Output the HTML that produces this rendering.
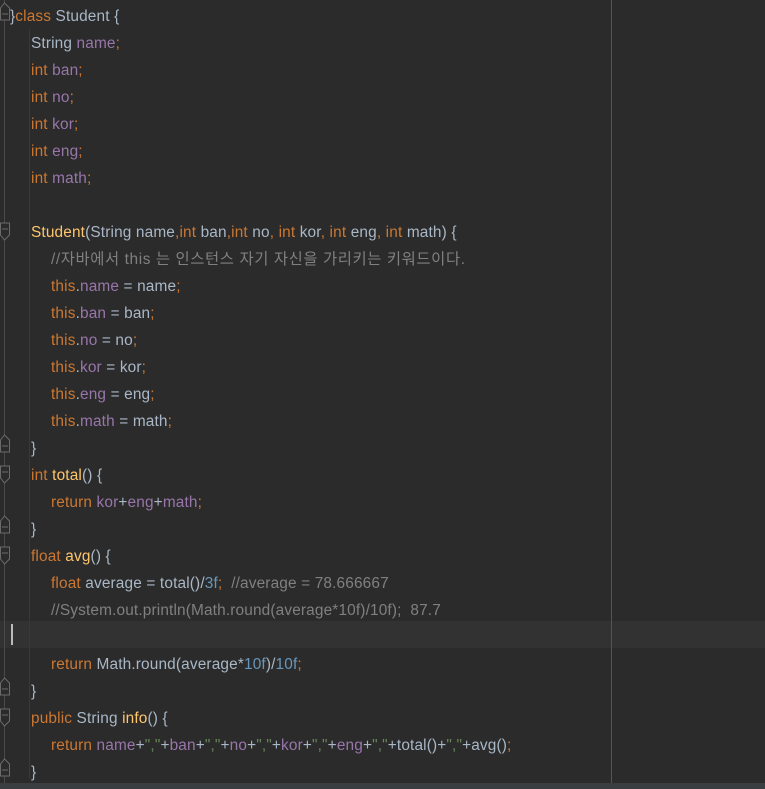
<!DOCTYPE html>
<html><head><meta charset="utf-8"><style>
html,body{margin:0;padding:0;background:#2b2b2b;width:765px;height:789px;overflow:hidden}
body{position:relative;font-family:"Liberation Sans","Noto Sans CJK KR",sans-serif;font-size:15.4px;letter-spacing:0.15px;color:#a9b7c6}
.l{position:absolute;left:0;height:27px;line-height:27px;white-space:pre;margin-top:1px}
.k{color:#cc7832}.f{color:#9876aa}.c{color:#808080}.n{color:#6897bb}.m{color:#ffc66d}.s{color:#6a8759}
.cur{position:absolute;left:0;top:621px;width:765px;height:27px;background:#323232}
.caret{position:absolute;left:11px;top:624px;width:2px;height:21px;background:#bbb}
.gut{position:absolute;left:4px;top:0;width:1px;height:783px;background:#4a4a4a}
.rm{position:absolute;left:611px;top:0;width:1px;height:783px;background:#555}
.bot{position:absolute;left:0;top:783px;width:765px;height:6px;background:#3b3e41}
.ig{position:absolute;width:1px;background:#393939}
.fm{position:absolute;left:0}
</style></head><body>
<div class="cur"></div>
<div class="gut"></div>
<div class="rm"></div>
<div class="ig" style="left:29px;top:29px;height:750px"></div>
<svg class="fm" width="12" height="789" style="top:0">
<g fill="#2b2b2b" stroke="#6b6b6b" stroke-width="1">
<path d="M0.5 8 L4.5 3 L9.5 8 V20 H0.5 Z"/><line x1="2" y1="14" x2="8" y2="14"/>
<path d="M0.5 223 H9.5 V235 L4.5 240 L0.5 235 Z"/><line x1="2" y1="229" x2="8" y2="229"/>
<path d="M0.5 440 L4.5 435 L9.5 440 V452 H0.5 Z"/><line x1="2" y1="446" x2="8" y2="446"/>
<path d="M0.5 466 H9.5 V478 L4.5 483 L0.5 478 Z"/><line x1="2" y1="472" x2="8" y2="472"/>
<path d="M0.5 521 L4.5 516 L9.5 521 V533 H0.5 Z"/><line x1="2" y1="527" x2="8" y2="527"/>
<path d="M0.5 547 H9.5 V559 L4.5 564 L0.5 559 Z"/><line x1="2" y1="553" x2="8" y2="553"/>
<path d="M0.5 683 L4.5 678 L9.5 683 V695 H0.5 Z"/><line x1="2" y1="689" x2="8" y2="689"/>
<path d="M0.5 709 H9.5 V721 L4.5 726 L0.5 721 Z"/><line x1="2" y1="715" x2="8" y2="715"/>
<path d="M0.5 764 L4.5 759 L9.5 764 V776 H0.5 Z"/><line x1="2" y1="770" x2="8" y2="770"/>
</g></svg>
<div class="caret"></div>
<div class="l" style="top:2px;left:10px">}<span class="k">class</span> Student {</div>
<div class="l" style="top:29px;left:31px">String <span class="f">name</span><span class="k">;</span></div>
<div class="l" style="top:56px;left:31px"><span class="k">int</span> <span class="f">ban</span><span class="k">;</span></div>
<div class="l" style="top:83px;left:31px"><span class="k">int</span> <span class="f">no</span><span class="k">;</span></div>
<div class="l" style="top:110px;left:31px"><span class="k">int</span> <span class="f">kor</span><span class="k">;</span></div>
<div class="l" style="top:137px;left:31px"><span class="k">int</span> <span class="f">eng</span><span class="k">;</span></div>
<div class="l" style="top:164px;left:31px"><span class="k">int</span> <span class="f">math</span><span class="k">;</span></div>
<div class="l" style="top:218px;left:31px"><span class="m">Student</span>(String name<span class="k">,int</span> ban<span class="k">,int</span> no<span class="k">, int</span> kor<span class="k">, int</span> eng<span class="k">, int</span> math) {</div>
<div class="l c" style="top:245px;left:51px;letter-spacing:0.6px">//자바에서 this 는 인스턴스 자기 자신을 가리키는 키워드이다.</div>
<div class="l" style="top:272px;left:51px"><span class="k">this</span>.<span class="f">name</span> = name<span class="k">;</span></div>
<div class="l" style="top:299px;left:51px"><span class="k">this</span>.<span class="f">ban</span> = ban<span class="k">;</span></div>
<div class="l" style="top:326px;left:51px"><span class="k">this</span>.<span class="f">no</span> = no<span class="k">;</span></div>
<div class="l" style="top:353px;left:51px"><span class="k">this</span>.<span class="f">kor</span> = kor<span class="k">;</span></div>
<div class="l" style="top:380px;left:51px"><span class="k">this</span>.<span class="f">eng</span> = eng<span class="k">;</span></div>
<div class="l" style="top:407px;left:51px"><span class="k">this</span>.<span class="f">math</span> = math<span class="k">;</span></div>
<div class="l" style="top:434px;left:31px">}</div>
<div class="l" style="top:461px;left:31px"><span class="k">int</span> <span class="m">total</span>() {</div>
<div class="l" style="top:488px;left:51px"><span class="k">return</span> <span class="f">kor</span>+<span class="f">eng</span>+<span class="f">math</span><span class="k">;</span></div>
<div class="l" style="top:515px;left:31px">}</div>
<div class="l" style="top:542px;left:31px"><span class="k">float</span> <span class="m">avg</span>() {</div>
<div class="l" style="top:569px;left:51px"><span class="k">float</span> average = total()/<span class="n">3f</span><span class="k">;</span>  <span class="c">//average = 78.666667</span></div>
<div class="l c" style="top:596px;left:51px">//System.out.println(Math.round(average*10f)/10f);  87.7</div>
<div class="l" style="top:650px;left:51px"><span class="k">return</span> Math.round(average*<span class="n">10f</span>)/<span class="n">10f</span><span class="k">;</span></div>
<div class="l" style="top:677px;left:31px">}</div>
<div class="l" style="top:704px;left:31px"><span class="k">public</span> String <span class="m">info</span>() {</div>
<div class="l" style="top:731px;left:51px"><span class="k">return</span> <span class="f">name</span>+<span class="s">","</span>+<span class="f">ban</span>+<span class="s">","</span>+<span class="f">no</span>+<span class="s">","</span>+<span class="f">kor</span>+<span class="s">","</span>+<span class="f">eng</span>+<span class="s">","</span>+total()+<span class="s">","</span>+avg()<span class="k">;</span></div>
<div class="l" style="top:758px;left:31px">}</div>
<div class="bot"></div>
</body></html>
